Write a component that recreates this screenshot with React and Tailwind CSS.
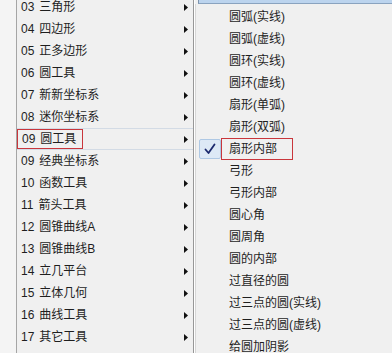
import React from "react";

const leftItems = [
  ["03", "三角形"],
  ["04", "四边形"],
  ["05", "正多边形"],
  ["06", "圆工具"],
  ["07", "新新坐标系"],
  ["08", "迷你坐标系"],
  ["09", "圆工具"],
  ["09", "经典坐标系"],
  ["10", "函数工具"],
  ["11", "箭头工具"],
  ["12", "圆锥曲线A"],
  ["13", "圆锥曲线B"],
  ["14", "立几平台"],
  ["15", "立体几何"],
  ["16", "曲线工具"],
  ["17", "其它工具"],
];

const rightItems = [
  "圆弧(实线)",
  "圆弧(虚线)",
  "圆环(实线)",
  "圆环(虚线)",
  "扇形(单弧)",
  "扇形(双弧)",
  "扇形内部",
  "弓形",
  "弓形内部",
  "圆心角",
  "圆周角",
  "圆的内部",
  "过直径的圆",
  "过三点的圆(实线)",
  "过三点的圆(虚线)",
  "给圆加阴影",
];

const Arrow = () => (
  <svg width="4" height="7" viewBox="0 0 4 7" className="shrink-0">
    <path d="M0 0 L4 3.5 L0 7 Z" fill="#111" />
  </svg>
);

const Check = () => (
  <svg width="12" height="12" viewBox="0 0 12 12">
    <path
      d="M1.5 6.5 L4.5 10 L10.5 1.5"
      fill="none"
      stroke="#1c2a6e"
      strokeWidth="1.8"
      strokeLinecap="round"
      strokeLinejoin="round"
    />
  </svg>
);

const App = () => {
  return (
    <div
      className="w-[392px] h-[353px] overflow-hidden flex bg-[#f0f0f0] text-[12px] text-[#1e1e1e]"
      style={{ fontFamily: '"Liberation Sans", "Noto Sans CJK SC", sans-serif' }}
    >
      <div className="w-[16px] shrink-0 bg-[#f4f4f4]" />

      <div className="w-[178px] shrink-0 border-l border-[#a5a5a5] border-r border-r-[#979797] flex flex-col -mt-[4px]">
        {leftItems.map(([num, name], i) => {
          const active = i === 6;
          return (
            <div
              key={i}
              className={
                "h-[22px] shrink-0 flex items-center justify-between pr-[5px] " +
                (active ? "border-y border-[#d3dbe5]" : "")
              }
            >
              <span
                className={
                  "flex items-center pl-[4px] " +
                  (active ? "h-[20px] w-[66px] border border-[#c9363c]" : "")
                }
              >
                <span>{num}</span>
                <span className="ml-[5px]">{name}</span>
              </span>
              <Arrow />
            </div>
          );
        })}
      </div>

      <div className="flex-1 flex flex-col border-l border-white">
        <div className="h-[4px] shrink-0 ml-[3px] bg-[#bcd4ee] border-b border-[#8aa3bf] border-l border-l-[#7d93ad]" />
        <div className="flex flex-col pt-[2px] border-l border-[#d6d6d6]">
          {rightItems.map((item, i) => {
            const checked = i === 6;
            return (
              <div key={i} className="h-[22px] shrink-0 flex items-center">
                <div className="w-[25px] h-[22px] flex items-center justify-center pl-[2px]">
                  {checked && (
                    <div className="w-[22px] h-[20px] flex items-center justify-center bg-[#dde9f6] border border-[#aec8e4] rounded-[2px]">
                      <Check />
                    </div>
                  )}
                </div>
                {checked ? (
                  <span className="h-[22px] w-[72px] flex items-center pl-[7px] border border-[#c9363c]">
                    {item}
                  </span>
                ) : (
                  <span className="ml-[8px]">{item}</span>
                )}
              </div>
            );
          })}
        </div>
      </div>
    </div>
  );
};

export default App;
